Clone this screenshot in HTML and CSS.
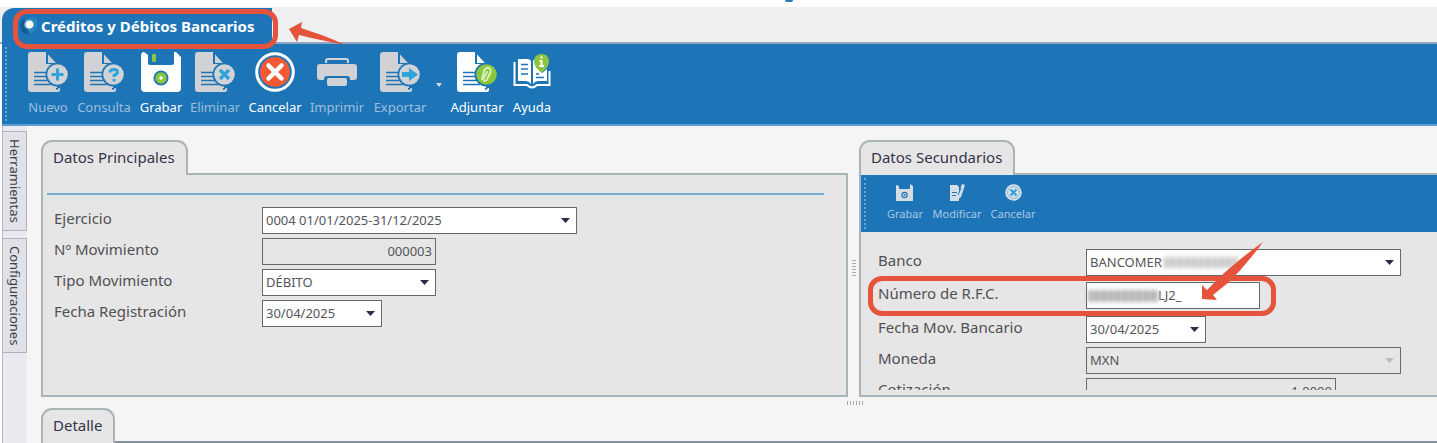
FILE: index.html
```html
<!DOCTYPE html>
<html lang="es">
<head>
<meta charset="utf-8">
<title>Créditos y Débitos Bancarios</title>
<link rel="stylesheet" href="styles.css">
</head>
<body>
<svg class="defs" aria-hidden="true">
  <symbol id="doc" viewBox="0 0 40 40">
    <path fill="currentColor" d="M3 0H18V14H28V36.500Q28 40 31 36L32 36V38Q32 40 29 40H3Q0 40 0 37V3Q0 0 3 0Z"/>
    <path fill="currentColor" d="M18 12H29V36H18Z"/>
    <path fill="currentColor" d="M20 2.500L28 11H20Z"/>
    <path stroke="#1d75b8" stroke-width="1.700" d="M6 20.500H21M6 24.500H20M6 28.500H21M6 32.500H23"/>
    <circle cx="29.500" cy="22.500" r="12" fill="#1d75b8"/>
  </symbol>
</svg>
<header class="strip">
  <span class="heading-tail"></span>
</header>
<nav class="window-tabs">
  <div class="window-tab">
    <svg class="orb" viewBox="0 0 18 20" aria-hidden="true"><circle cx="8" cy="10" r="8" fill="#155b93"/><path d="M5 3Q15 0 17 3V12Q14 17 9 18" fill="#2687bd"/><circle cx="9" cy="8.500" r="5" fill="#5fa5d1"/><circle cx="9.500" cy="8.500" r="3.800" fill="#fff"/></svg>
    <h1 class="window-title">Créditos y Débitos Bancarios</h1>
    <span class="callout callout-title"></span>
    <svg class="arrow-title" viewBox="0 0 58 24" aria-hidden="true"><path fill="#e5533d" d="M0 7L13 0L12 6Q35 13 57 23Q30 18 10 13L8 20Z"/></svg>
  </div>
</nav>
<div class="toolbar">
  <button class="tool off"><svg viewBox="0 0 40 40"><use href="#doc"/><circle cx="29.500" cy="22.500" r="10.300" fill="currentColor"/><path stroke="#2fa3dc" stroke-width="3" d="M29.500 16.500V28.500M23.500 22.500H35.500"/></svg>Nuevo</button>
  <button class="tool off"><svg viewBox="0 0 40 40"><use href="#doc"/><circle cx="29.500" cy="22.500" r="10.300" fill="currentColor"/><path fill="none" stroke="#2fa3dc" stroke-width="3" d="M26 20.500Q26 17.500 30 17.500Q33.500 17.500 33.500 20Q33.500 22 30 23.500V25M30 27V29.500"/></svg>Consulta</button>
  <button class="tool"><svg viewBox="0 0 40 40"><path fill="#fff" d="M3 0L7 3V11Q7 13 9 13H31Q33 13 33 11V0H35L40 5V36Q40 40 36 40H4Q0 40 0 36V4Q0 0 3 0Z"/><rect x="11" y="2" width="4" height="8" rx="1" fill="#8cc63f"/><circle cx="20" cy="26" r="7.500" fill="#1d75b8"/><circle cx="20" cy="26" r="5.800" fill="#8cc63f"/><circle cx="20" cy="26" r="1.800" fill="#fff"/></svg>Grabar</button>
  <button class="tool off"><svg viewBox="0 0 40 40"><use href="#doc"/><circle cx="29.500" cy="22.500" r="10.300" fill="currentColor"/><path stroke="#2fa3dc" stroke-width="3.500" d="M25 18L34 27M34 18L25 27"/></svg>Eliminar</button>
  <button class="tool"><svg viewBox="0 0 40 40"><circle cx="20" cy="20" r="18.300" fill="#1d75b8" stroke="#fff" stroke-width="3"/><circle cx="20" cy="20" r="15" fill="#f15a34"/><path stroke="#fff" stroke-width="4.500" stroke-linecap="round" d="M13.500 13.500L26.500 26.500M26.500 13.500L13.500 26.500"/></svg>Cancelar</button>
  <button class="tool off"><svg viewBox="0 0 40 40"><path fill="none" stroke="currentColor" stroke-width="2" d="M9 11V9Q9 7 11 7H29Q31 7 31 9V11"/><path fill="currentColor" d="M3 12H37Q40 12 40 15V25Q40 28 37 28H33V27Q33 24 30 24H10Q7 24 7 27V28H3Q0 28 0 25V15Q0 12 3 12Z"/><path fill="currentColor" d="M12 26H28Q30 26 30 28V32Q30 34 28 34H12Q10 34 10 32V28Q10 26 12 26Z"/></svg>Imprimir</button>
  <button class="tool off"><svg viewBox="0 0 40 40"><use href="#doc"/><circle cx="29.500" cy="22.500" r="10.300" fill="currentColor"/><path fill="#2fa3dc" d="M22 20H29V16L38 22.500L29 29V25H22Z"/></svg>Exportar</button>
  <button class="tool-more" aria-label="Más opciones"><span class="caret"></span></button>
  <button class="tool"><svg viewBox="0 0 40 40"><use href="#doc"/><circle cx="29.500" cy="22.500" r="10.300" fill="#8cc63f"/><path fill="none" stroke="#d7efb8" stroke-width="2" stroke-linecap="round" d="M25 27L27 19Q29 14.500 32 16Q35 17.500 33 21.500L30 27.500Q28 30 26.500 28Q26 26 28.500 23L30 20"/></svg>Adjuntar</button>
  <button class="tool"><svg viewBox="0 0 40 40"><path fill="none" stroke="#fff" stroke-width="2" d="M2.500 10V33H15Q20 38 25 33H37.500V19"/><path fill="#fff" d="M6 7H15Q19 7 19 10V32Q17 29 14 29H6ZM21 10Q21 7 24 7V15L30 21L35 17V29H26Q23 29 21 32Z"/><path stroke="#1d75b8" stroke-width="1.500" d="M9 12.500H16M9 17H16M9 22H16M24 22H27M24 25.500H32"/><path fill="#8cc63f" d="M29.500 2Q37 2 37 9.500Q37 15 29.500 20.500Q22 15 22 9.500Q22 2 29.500 2Z"/><path stroke="#fff" stroke-width="2" d="M29.500 4.500V6.500M27.500 9H30M29.500 8V14M27 14H32"/></svg>Ayuda</button>
</div>
<div class="workspace">
  <aside class="rail">
    <button class="rail-tab">Herramientas</button>
    <button class="rail-tab">Configuraciones</button>
  </aside>
  <main class="content">
    <div class="panels">
      <section class="panel">
        <h2 class="panel-tab">Datos Principales</h2>
        <div class="panel-body">
          <hr class="rule">
          <form class="form form-main">
            <label for="ejercicio">Ejercicio</label>
            <span class="field wide"><select id="ejercicio"><option>0004 01/01/2025-31/12/2025</option></select><span class="caret"></span></span>
            <label for="numero">Nº Movimiento</label>
            <span class="field medium disabled"><input id="numero" class="right" value="000003" readonly></span>
            <label for="tipo">Tipo Movimiento</label>
            <span class="field medium"><select id="tipo"><option>DÉBITO</option></select><span class="caret"></span></span>
            <label for="fecha">Fecha Registración</label>
            <span class="field short"><input id="fecha" value="30/04/2025"><span class="caret"></span></span>
          </form>
        </div>
      </section>
      <div class="splitter"><span class="grip grip-v"></span></div>
      <section class="panel panel-open">
        <h2 class="panel-tab">Datos Secundarios</h2>
        <div class="panel-body">
          <div class="mini-toolbar">
            <button class="mini"><svg viewBox="0 0 17 17"><path fill="currentColor" d="M0 1L3 2V5H14V0L17 2V17H0Z"/><circle cx="8.500" cy="11" r="3.200" fill="#1d75b8"/><circle cx="8.500" cy="11" r="2" fill="currentColor"/><circle cx="8.500" cy="11" r="1" fill="#1d75b8"/></svg>Grabar</button>
            <button class="mini"><svg viewBox="0 0 17 17"><path fill="currentColor" d="M1 1H8L10 3V17H1ZM13 0L16 1L12 13L8 16L9 11Z"/><path stroke="#1d75b8" d="M3 8.500H8M3 11.500H7M9 11L12 4"/></svg>Modificar</button>
            <button class="mini"><svg viewBox="0 0 17 17"><circle cx="8.500" cy="8.500" r="8.300" fill="currentColor"/><circle cx="8.500" cy="8.500" r="6" fill="none" stroke="#8fb9d9"/><path stroke="#2f9fd8" stroke-width="2" d="M5.500 5.500L11.500 11.500M11.500 5.500L5.500 11.500"/></svg>Cancelar</button>
          </div>
          <form class="form form-side">
            <label for="banco">Banco</label>
            <span class="field wide"><select id="banco"><option>BANCOMER</option></select><span class="mask mask-bank"></span><span class="caret"></span></span>
            <label for="rfc" class="spaced">Número de R.F.C.</label>
            <span class="field medium spaced"><input id="rfc" class="masked" value="LJ2_"><span class="mask mask-rfc"></span></span>
            <label for="fechamov">Fecha Mov. Bancario</label>
            <span class="field short"><input id="fechamov" value="30/04/2025"><span class="caret"></span></span>
            <label for="moneda">Moneda</label>
            <span class="field wide disabled"><select id="moneda" disabled><option>MXN</option></select><span class="caret"></span></span>
            <label for="cotizacion">Cotización</label>
            <span class="field rate disabled"><input id="cotizacion" class="right" value="1.0000" readonly></span>
          </form>
          <span class="callout callout-rfc"></span>
          <svg class="arrow-rfc" viewBox="0 0 62 58" aria-hidden="true"><path fill="#e5533d" d="M61 0Q45 11 21 32L5 48L0 43V57L15 58L11 53L27 40Q45 22 61 0Z"/></svg>
        </div>
      </section>
    </div>
    <div class="splitter-row"><span class="grip grip-h"></span></div>
    <section class="panel detail">
      <h2 class="panel-tab">Detalle</h2>
      <div class="panel-body"></div>
    </section>
  </main>
</div>
</body>
</html>
```
FILE: styles.css
```css
* { box-sizing: border-box; }

body {
  margin: 0;
  height: 100vh;
  overflow: hidden;
  display: flex;
  flex-direction: column;
  background: #fff;
  color: #505054;
  font: 15px/20px "Noto Sans", sans-serif;
}

button, input, select { font: inherit; color: inherit; margin: 0; }
button { border: 0; padding: 0; background: none; }
.defs { display: none; }

.strip {
  flex: none;
  height: 7px;
  padding-left: 55%;
  display: flex;
  align-items: flex-start;
}
.heading-tail {
  width: 8px;
  height: 2px;
  margin-left: -5px;
  border-radius: 0 0 4px 4px;
  background: #2a76b8;
}

.window-tabs {
  flex: none;
  height: 37px;
  padding: 1px 0 0 2px;
  background: #efefef;
  border-bottom: 2px solid #8fa5c0;
}
.window-tab {
  position: relative;
  display: flex;
  align-items: center;
  width: 270px;
  height: 36px;
  padding-left: 18px;
  gap: 3px;
  background: #1d75b8;
  border-radius: 12px 0 0 0;
}
.orb { width: 18px; height: 20px; }
.window-title { margin: 0; font-size: 15px; line-height: 20px; color: #fff; white-space: nowrap; }

.callout { position: absolute; border: 5px solid #e5533d; border-radius: 14px; z-index: 3; pointer-events: none; }
.callout-title { left: 11px; top: 1px; width: 265px; height: 40px; }
.arrow-title { position: absolute; left: 287px; top: 14px; width: 58px; height: 24px; z-index: 3; }

.toolbar {
  flex: none;
  position: relative;
  display: grid;
  grid-template-columns: 40px 54px 42px 48px 54px 52px 56px 4px 54px 38px;
  column-gap: 9px;
  justify-items: center;
  margin-left: 2px;
  padding: 8px 0 6px 26px;
  height: 82px;
  background: #1d75b8;
  border-bottom: 2px solid #5d9dd0;
}
.toolbar::before, .mini-toolbar::before {
  content: "";
  position: absolute;
  left: 3px;
  top: 3px;
  bottom: 3px;
  border-left: 2px dotted #6aa8d6;
}
.tool {
  display: flex;
  flex-direction: column;
  align-items: center;
  gap: 5px;
  color: #fff;
  font-size: 13px;
  line-height: 20px;
  white-space: nowrap;
}
.tool svg { flex: none; width: 40px; height: 40px; }
.tool.off { color: #9fbedb; }
.tool.off svg { color: #d0d2d5; }

.caret {
  display: block;
  width: 9px;
  height: 5px;
  background: #2c2b45;
  clip-path: polygon(0 0, 100% 0, 50% 100%);
}
.tool-more .caret { width: 6px; height: 4px; background: #d7dbe0; }

.workspace {
  flex: 1;
  display: flex;
  min-height: 0;
  margin-left: 2px;
  background: #f5f5f5;
  border-left: 1px solid #b5b8c4;
}
.rail {
  flex: none;
  width: 24px;
  padding-top: 5px;
  display: flex;
  flex-direction: column;
  gap: 7px;
  background: #e9eaef;
}
.rail-tab {
  width: 24px;
  padding: 7px 0;
  writing-mode: vertical-rl;
  font-size: 13px;
  line-height: 20px;
  color: #3f3e4c;
  text-align: left;
  border: 1px solid #b0b1bb;
  border-left: 0;
  background: #e1e2e8;
}

.content { flex: 1; min-width: 0; padding: 14px 0 0 14px; display: flex; flex-direction: column; }
.panels { flex: none; display: grid; grid-template-columns: 807fr 11px 578fr; }
.panel { display: flex; flex-direction: column; min-width: 0; }
.panel-tab {
  position: relative;
  z-index: 1;
  align-self: flex-start;
  margin: 0 0 -2px;
  padding: 6px 11px 8px 10px;
  border: 2px solid #a9b5b9;
  border-bottom: 0;
  border-radius: 11px 11px 0 0;
  background: #e6e6e6;
  color: #35334a;
  font-size: 15px;
  font-weight: 400;
  line-height: 19px;
}
.panel-body {
  position: relative;
  flex: 1;
  border: 2px solid #a9b5b9;
  background: #e6e6e6;
}
.panel-open .panel-body { border-right: 0; }
.rule { margin: 18px 22px 0 4px; border: 0; height: 2px; background: #77acd4; }

.form {
  display: grid;
  grid-template-columns: 208px 1fr;
  grid-auto-rows: 27px;
  row-gap: 4px;
  align-items: center;
}
.form label { line-height: 20px; padding-bottom: 6px; }
.form-main { padding: 12px 0 68px 11px; }
.form-side {
  grid-template-rows: 27px 32px;
  padding: 17px 0 0 17px;
  height: 158px;
  overflow: hidden;
}
.field {
  position: relative;
  display: flex;
  align-items: center;
  height: 27px;
  border: 1px solid #686868;
  background: #fff;
  font-size: 13px;
}
.field input, .field select {
  width: 100%;
  height: 24px;
  padding: 0 3px 1px;
  border: 0;
  outline: 0;
  background: none;
  appearance: none;
  opacity: 1;
  color: #55555b;
}
.field .caret { position: absolute; right: 6px; top: 10px; }
.field .right { text-align: right; }
.field.disabled { background: #e6e6e6; }
.field.disabled .caret { background: #bdbdc4; }
.field .masked { padding-left: 71px; }
.wide { width: 315px; }
.medium { width: 174px; }
.short { width: 120px; }
.rate { width: 250px; }
.spaced { margin: 2px 0 3px; }

.mask {
  position: absolute;
  filter: blur(2px);
  background: repeating-linear-gradient(90deg, #aaa 0 4px, #d2d2d2 4px 7px);
}
.mask-bank { left: 77px; top: 7px; width: 74px; height: 11px; opacity: 0.7; }
.mask-rfc { left: 1px; top: 7px; width: 71px; height: 12px; }

.mini-toolbar {
  position: relative;
  display: grid;
  grid-template-columns: 38px 48px 46px;
  column-gap: 9px;
  justify-items: center;
  height: 57px;
  padding: 9px 0 0 25px;
  background: #1d75b8;
}
.mini {
  display: flex;
  flex-direction: column;
  align-items: center;
  gap: 5px;
  color: #a9c8e2;
  font-size: 11px;
  line-height: 16px;
  white-space: nowrap;
}
.mini svg { flex: none; width: 17px; height: 17px; color: #d5dde5; }

.callout-rfc { left: 7px; top: 101px; width: 408px; height: 40px; }
.arrow-rfc { position: absolute; left: 341px; top: 67px; width: 62px; height: 58px; z-index: 4; }

.splitter { display: flex; align-items: center; justify-content: center; }
.grip-v { width: 4px; height: 17px; background: repeating-linear-gradient(#a9a9b0 0 1px, #f5f5f5 1px 3px); }
.splitter-row { flex: none; height: 11px; display: flex; justify-content: center; align-items: center; padding-left: 233px; }
.grip-h { width: 17px; height: 4px; background: repeating-linear-gradient(90deg, #a9a9b0 0 1px, #f5f5f5 1px 3px); }

.detail { flex: 1; min-height: 0; }
.detail .panel-body { border-width: 2px 0 0; border-color: #82929c; }
```
